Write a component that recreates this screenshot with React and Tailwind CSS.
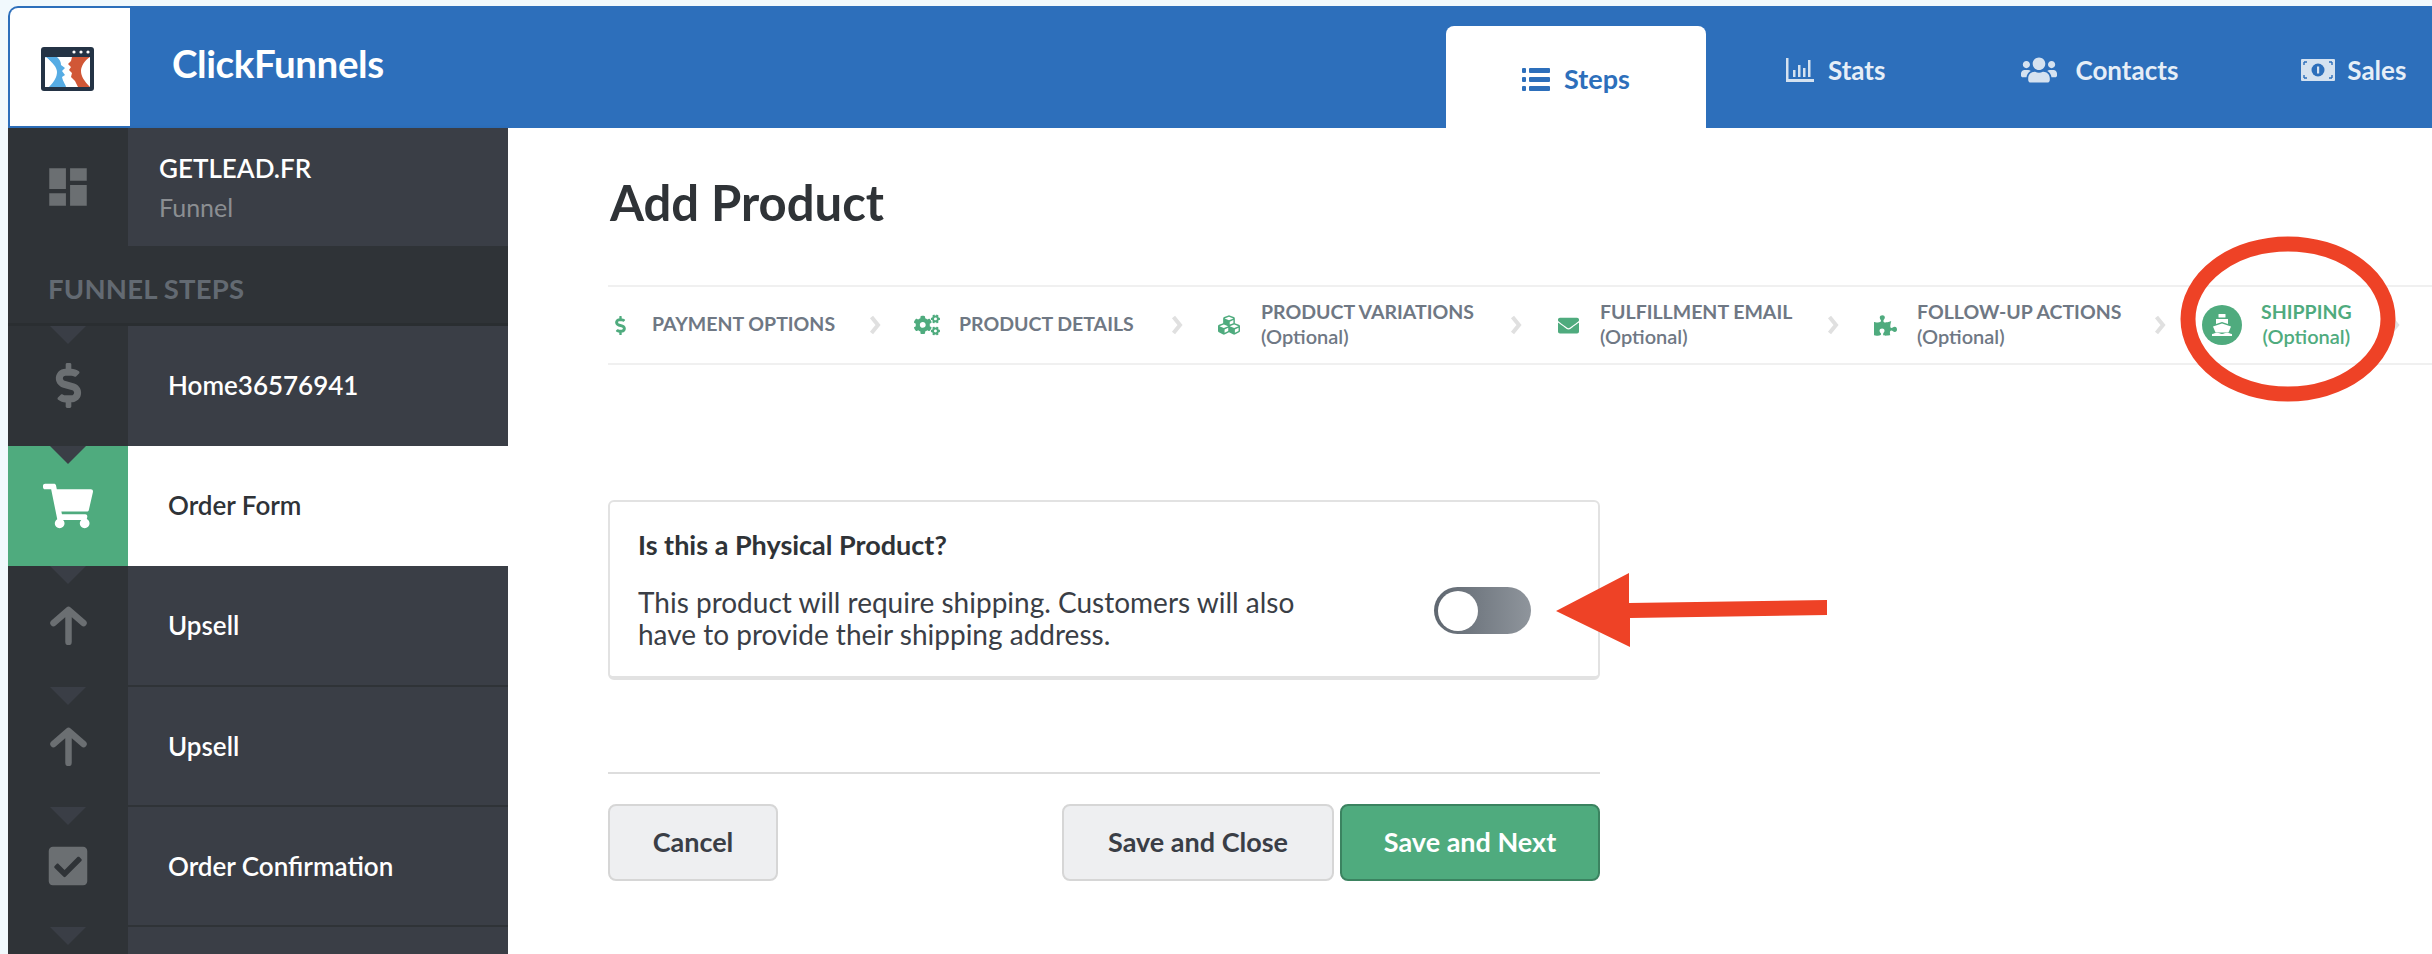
import React from 'react'
import { FaCheckSquare, FaCogs, FaCubes, FaDollarSign, FaEnvelope, FaPuzzlePiece, FaShoppingCart, FaUsers } from 'react-icons/fa'
import { MdDashboard } from 'react-icons/md'
import clsx from 'clsx'

function UpArrow({ color }) {
  return (
    <svg width="37" height="39" viewBox="0 0 37 39" fill="none" stroke={color} strokeWidth="6.5" strokeLinecap="round" strokeLinejoin="round">
      <path d="M18.5 36V5M3.5 17 18.5 4l15 13" />
    </svg>
  )
}

const funnelSteps = [
  { label: 'Home36576941', icon: FaDollarSign, size: 45 },
  { label: 'Order Form', icon: FaShoppingCart, size: 50, active: true },
  { label: 'Upsell', icon: UpArrow },
  { label: 'Upsell', icon: UpArrow },
  { label: 'Order Confirmation', icon: FaCheckSquare, size: 44 },
  { label: '', icon: null },
]

const productSteps = [
  { label: 'PAYMENT OPTIONS', icon: FaDollarSign, size: 19, width: 'w-[307px]' },
  { label: 'PRODUCT DETAILS', icon: FaCogs, size: 26, width: 'w-[302px]' },
  { label: 'PRODUCT VARIATIONS', optional: true, icon: FaCubes, size: 22, width: 'w-[339px]' },
  { label: 'FULFILLMENT EMAIL', optional: true, icon: FaEnvelope, size: 21, width: 'w-[317px]' },
  { label: 'FOLLOW-UP ACTIONS', optional: true, icon: FaPuzzlePiece, size: 23, width: 'w-[327px]' },
]

function Logo() {
  return (
    <svg width="53" height="44" viewBox="0 0 53 44">
      <rect width="53" height="44" rx="3" fill="#243345" />
      <circle cx="33" cy="5" r="1.6" fill="#fff" />
      <circle cx="40" cy="5" r="1.6" fill="#fff" />
      <circle cx="47" cy="5" r="1.6" fill="#fff" />
      <rect x="4" y="10" width="45" height="30" fill="#fff" />
      <path d="M4 10h12c3 3 4 5 4 8l4 3-3 3 3 4-3 2c1 5 4 8 4 10H8c6-6 8-11 8-15S12 15 4 10Z" fill="#56ace4" />
      <path d="M5 10c5 4 7 8 7 14S10 36 5 40Z" fill="#fff" />
      <path d="M49 10H31l-1 4-3 3 3 3-2 3 3 3-1 4 4 4 3 6h12c-6-6-9-11-9-16s4-11 9-14Z" fill="#d15736" />
    </svg>
  )
}

function ListIcon() {
  return (
    <svg width="28" height="24" viewBox="0 0 28 24" fill="#2d6fbb">
      <rect x="0" y="1" width="4" height="5" rx="1" />
      <rect x="0" y="10" width="4" height="5" rx="1" />
      <rect x="0" y="19" width="4" height="5" rx="1" />
      <rect x="7" y="1" width="21" height="5" rx="1" />
      <rect x="7" y="10" width="21" height="5" rx="1" />
      <rect x="7" y="19" width="21" height="5" rx="1" />
    </svg>
  )
}

function StatsIcon() {
  return (
    <svg width="28" height="24" viewBox="0 0 28 24" fill="#d5e2f0">
      <path d="M0 0h2.5v21H28v3H0Z" />
      <rect x="7" y="12" width="2.5" height="7" />
      <rect x="12" y="7" width="2.5" height="12" />
      <rect x="17" y="10" width="2.5" height="9" />
      <rect x="22" y="2" width="2.5" height="17" />
    </svg>
  )
}

function MoneyIcon() {
  return (
    <svg width="34" height="22" viewBox="0 0 34 22">
      <rect width="34" height="22" rx="1" fill="#d5e2f0" />
      <circle cx="17" cy="11" r="6.5" fill="#2d6fbb" />
      <rect x="16" y="7.5" width="2.2" height="7" fill="#d5e2f0" />
      <path d="M3 3h3M3 3v3M31 3h-3M31 3v3M3 19h3M3 19v-3M31 19h-3M31 19v-3" stroke="#2d6fbb" strokeWidth="1.4" />
    </svg>
  )
}

function ShipIcon() {
  return (
    <svg width="26" height="26" viewBox="0 0 26 26" fill="#fff">
      <rect x="9.5" y="2" width="7" height="3.5" rx="0.5" />
      <path d="M7 7h12v5l-6-2-6 2Z" />
      <path d="M4 14.5 13 11.5l9 3-2.5 6H6.5Z" />
      <path d="M3 22c2 0 3-1.2 5-1.2s3 1.2 5 1.2 3-1.2 5-1.2 3 1.2 5 1.2v2H3Z" />
    </svg>
  )
}

function Chevron() {
  return (
    <svg width="12" height="20" viewBox="0 0 12 20" className="shrink-0">
      <path d="M2.5 2 9 10l-6.5 8" fill="none" stroke="#e0e0e0" strokeWidth="4" />
    </svg>
  )
}

function NavTab({ icon, label, gap }) {
  return (
    <div className={clsx('flex items-center pt-[6px] text-[26px] font-bold text-[#e6eef7]', gap)}>
      {icon}
      <span>{label}</span>
    </div>
  )
}

function StepLabel({ label, optional, green }) {
  return (
    <div className={clsx('-mt-[3px] text-[19.5px] leading-[25px] font-bold', green ? 'text-[#4fab7e]' : 'text-[#6f7884]')}>
      <div>{label}</div>
      {optional && <div className="text-[20px] font-semibold">(Optional)</div>}
    </div>
  )
}

export default function App() {
  return (
    <div className="relative h-screen overflow-hidden bg-[#f1f9fd] pt-[6px] pl-[8px] font-[Lato,sans-serif]">
      {/* Top bar */}
      <header className="flex h-[122px] items-stretch rounded-tl-[10px] bg-[#2d6fbb]">
        <div className="mt-[2px] mb-[2px] ml-[2px] flex w-[120px] items-center justify-center rounded-tl-[8px] bg-white pt-[4px] pr-[5px]">
          <Logo />
        </div>
        <div className="ml-[42px] flex w-[212px] items-center pb-[6px] text-[38.5px] font-bold tracking-[-0.4px] text-white">ClickFunnels</div>
        <nav className="ml-[1062px] flex items-end">
          <div className="flex h-[102px] w-[260px] items-center justify-center gap-[14px] rounded-t-[8px] bg-white pt-[4px] text-[27px] font-bold text-[#2d6fbb]">
            <ListIcon />
            <span>Steps</span>
          </div>
          <div className="ml-[80px] flex h-full items-center">
            <NavTab icon={<StatsIcon />} label="Stats" gap="gap-[14px]" />
            <NavTab icon={<FaUsers size={36} color="#d5e2f0" />} label="Contacts" gap="ml-[136px] gap-[18px]" />
            <NavTab icon={<MoneyIcon />} label="Sales" gap="ml-[123px] gap-[12px]" />
          </div>
        </nav>
      </header>

      <div className="flex h-[826px]">
        {/* Sidebar */}
        <aside className="w-[500px] shrink-0 bg-[#2f3337] shadow-[2px_0_4px_rgba(0,0,0,0.06)]">
          <div className="flex h-[118px]">
            <div className="flex w-[120px] items-center justify-center bg-[#2f3337]">
              <MdDashboard size={50} color="#6b6f72" />
            </div>
            <div className="flex-1 bg-[#3a3e46] pt-[20px] pl-[31px]">
              <div className="text-[26px] leading-[40px] font-semibold text-white">GETLEAD.FR</div>
              <div className="mt-[4px] text-[25px] leading-[30px] text-[#8b8e92]">Funnel</div>
            </div>
          </div>
          <div className="mt-[2px] flex h-[78px] items-center border-b-[3px] border-[#2a2e31] pt-[7px] pl-[40px] text-[27.5px] font-bold tracking-[0.2px] text-[#636a72]">
            FUNNEL STEPS
          </div>
          {funnelSteps.map(({ label, icon: Icon, size, active }, i) => (
            <div key={i} className={clsx('flex h-[119.8px]', i > 2 && 'border-t-2 border-[#2f3337]')}>
              <div className={clsx('relative flex w-[120px] items-center justify-center', active ? 'bg-[#4fab7e]' : 'bg-[#2f3337]')}>
                <div className="absolute top-0 left-[42px] h-0 w-0 border-x-[18px] border-t-[18px] border-x-transparent border-t-[#3a3e46]" />
                {Icon && <Icon size={size} color={active ? '#ffffff' : '#6b6f72'} />}
              </div>
              <div className={clsx('flex flex-1 items-center pl-[40px] text-[26px] font-semibold', active ? 'bg-white text-[#2f3337] font-bold' : 'bg-[#3a3e46] text-white')}>
                {label}
              </div>
            </div>
          ))}
        </aside>

        {/* Main */}
        <main className="min-w-0 flex-1 bg-white pl-[100px]">
          <h1 className="pt-[47px] pl-[2px] text-[49px] leading-[54px] font-bold text-[#2f3337]">Add Product</h1>

          <div className="mt-[56px] flex h-[80px] items-center border-y-2 border-[#f0f0f0] pl-[2px]">
            {productSteps.map(({ label, optional, icon: Icon, size, width }) => (
              <div key={label} className={clsx('flex shrink-0 items-center', width)}>
                <div className="flex w-[20px] shrink-0 items-center justify-center">
                  <Icon size={size} color="#4fab7e" className="shrink-0" />
                </div>
                <div className="ml-[22px] whitespace-nowrap">
                  <StepLabel label={label} optional={optional} />
                </div>
                <div className="mr-[36px] ml-auto">
                  <Chevron />
                </div>
              </div>
            ))}
            <div className="flex shrink-0 items-center">
              <div className="flex h-[40px] w-[40px] items-center justify-center rounded-full bg-[#4fab7e]">
                <ShipIcon />
              </div>
              <div className="ml-[19px] whitespace-nowrap text-center">
                <StepLabel label="SHIPPING" optional green />
              </div>
              <div className="ml-[36px]">
                <Chevron />
              </div>
            </div>
          </div>

          <div className="mt-[135px] flex h-[180px] w-[992px] flex-col rounded-[6px] border-2 border-b-4 border-[#e2e2e2] px-[28px] pt-[27px]">
            <div className="text-[27px] leading-[32px] font-bold text-[#2f3337]">Is this a Physical Product?</div>
            <div className="mt-[25px] flex items-start justify-between">
              <p className="w-[700px] text-[28px] leading-[32px] text-[#3a3e46]">
                This product will require shipping. Customers will also have to provide their shipping address.
              </p>
              <div className="mt-[1px] mr-[39px] flex h-[47px] w-[97px] items-center rounded-full bg-gradient-to-r from-[#5f6770] to-[#8f959c] pl-[4px]">
                <div className="h-[40px] w-[40px] rounded-full bg-white" />
              </div>
            </div>
          </div>

          <div className="mt-[92px] w-[992px] border-t-2 border-[#dddddd] pt-[30px]">
            <div className="flex gap-[6px] text-[27px] font-bold">
              <button className="mr-auto h-[77px] w-[170px] rounded-[8px] border-2 border-[#d6d6d6] bg-[#eeeff1] text-[#3a3e46]">Cancel</button>
              <button className="h-[77px] w-[272px] rounded-[8px] border-2 border-[#d6d6d6] bg-[#eeeff1] text-[#3a3e46]">Save and Close</button>
              <button className="h-[77px] w-[260px] rounded-[8px] border-2 border-[#3b8360] bg-[#4fab7e] text-white">Save and Next</button>
            </div>
          </div>
        </main>
      </div>

      {/* Red annotations drawn over the screenshot */}
      <svg className="pointer-events-none absolute inset-0" width="2432" height="954">
        <ellipse cx="2288" cy="319" rx="100" ry="75" fill="none" stroke="#ee4226" strokeWidth="15" />
        <path d="M1556 611 1629 573V603L1827 600V615L1630 618V647Z" fill="#ee4226" />
      </svg>
    </div>
  )
}
